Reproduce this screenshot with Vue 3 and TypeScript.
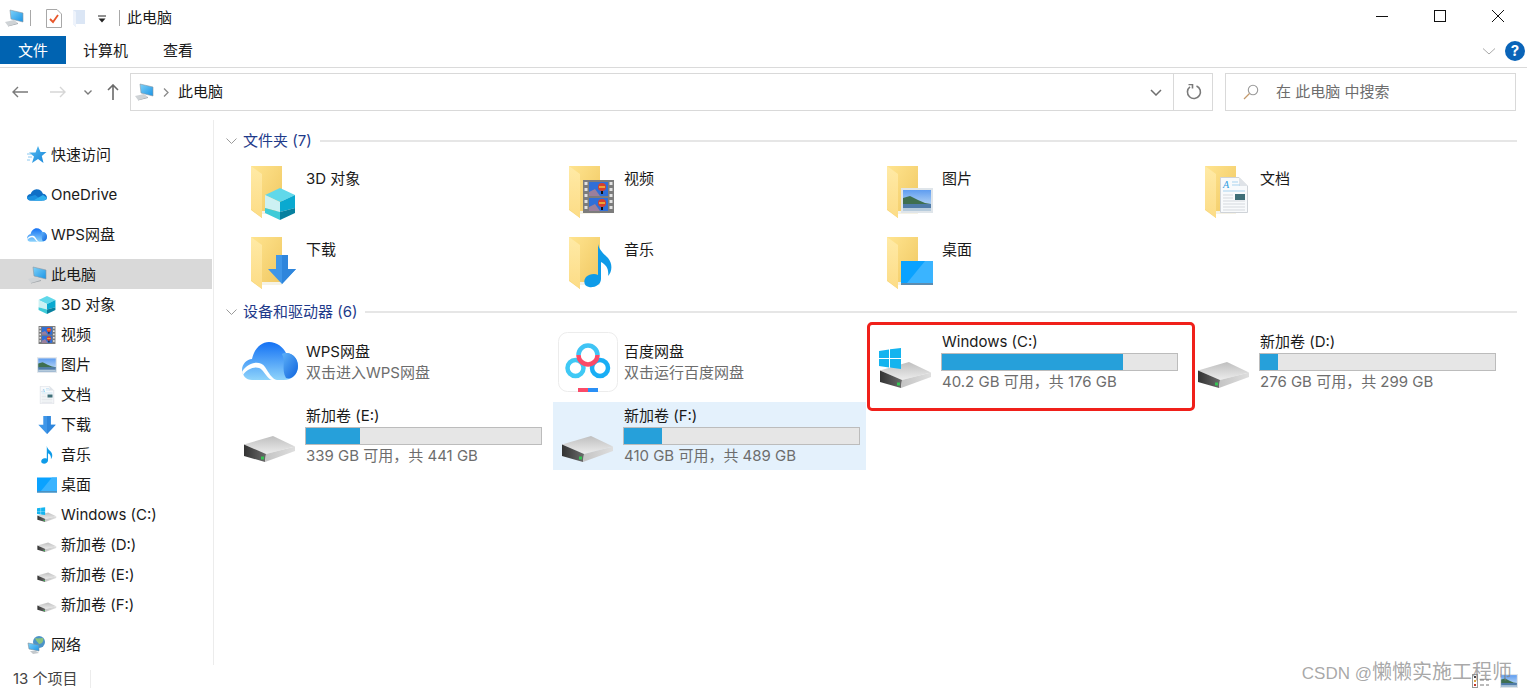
<script setup lang="ts">
interface NavItem { label: string; icon: string; child?: boolean; selected?: boolean; gap?: boolean }
const nav: NavItem[] = [
  { label: '快速访问', icon: 'star' },
  { label: 'OneDrive', icon: 'onedrive', gap: true },
  { label: 'WPS网盘', icon: 'wps', gap: true },
  { label: '此电脑', icon: 'pc', selected: true, gap: true },
  { label: '3D 对象', icon: 'cube', child: true },
  { label: '视频', icon: 'film', child: true },
  { label: '图片', icon: 'picture', child: true },
  { label: '文档', icon: 'doc', child: true },
  { label: '下载', icon: 'arrow', child: true },
  { label: '音乐', icon: 'music', child: true },
  { label: '桌面', icon: 'desktop', child: true },
  { label: 'Windows (C:)', icon: 'windrive', child: true },
  { label: '新加卷 (D:)', icon: 'drive', child: true },
  { label: '新加卷 (E:)', icon: 'drive', child: true },
  { label: '新加卷 (F:)', icon: 'drive', child: true },
  { label: '网络', icon: 'network', gap: true },
]
const folders = [
  { name: '3D 对象', icon: 'cube', x: 16, y: 24, w: 32, h: 32 },
  { name: '视频', icon: 'film', x: 17, y: 16, w: 31, h: 33 },
  { name: '图片', icon: 'picture', x: 17, y: 24, w: 32, h: 25 },
  { name: '文档', icon: 'doc', x: 18, y: 13, w: 28, h: 36 },
  { name: '下载', icon: 'arrow', x: 20, y: 20, w: 28, h: 29 },
  { name: '音乐', icon: 'music', x: 18, y: 9, w: 29, h: 44 },
  { name: '桌面', icon: 'desktop', x: 17, y: 26, w: 32, h: 24 },
]
const drives = [
  { name: 'Windows (C:)', free: 40.2, total: 176, icon: 'windrive', hi: false },
  { name: '新加卷 (D:)', free: 276, total: 299, icon: 'drive', hi: false },
  { name: '新加卷 (E:)', free: 339, total: 441, icon: 'drive', hi: false },
  { name: '新加卷 (F:)', free: 410, total: 489, icon: 'drive', hi: true },
]
const pct = (d: { free: number; total: number }) => ((d.total - d.free) / d.total) * 100 + '%'
</script>

<template>
  <div class="win">
    <svg class="defs" width="0" height="0" aria-hidden="true">
      <defs>
        <linearGradient id="gBack" x1="0" y1="0" x2="1" y2="1"><stop offset="0" stop-color="#ffe48f"/><stop offset="1" stop-color="#efc65f"/></linearGradient>
        <linearGradient id="gFront" x1="0" y1="0" x2="0" y2="1"><stop offset="0" stop-color="#ffeaa6"/><stop offset="1" stop-color="#fcdc86"/></linearGradient>
        <linearGradient id="gWps" x1="0" y1="0" x2="0" y2="1"><stop offset="0" stop-color="#1371f4"/><stop offset="1" stop-color="#8fd4fb"/></linearGradient>
        <linearGradient id="gWps2" x1="0" y1="0" x2="1" y2="1"><stop offset="0" stop-color="#5fb2f8"/><stop offset="1" stop-color="#0f63dd"/></linearGradient>
        <linearGradient id="gTop" x1="0" y1="0" x2="0" y2="1"><stop offset="0" stop-color="#bfbfbf"/><stop offset="1" stop-color="#ececec"/></linearGradient>
        <linearGradient id="gSide" x1="0" y1="0" x2="1" y2="0"><stop offset="0" stop-color="#c4c4c4"/><stop offset="1" stop-color="#dedede"/></linearGradient>
        <linearGradient id="gFace" x1="0" y1="0" x2="1" y2="0"><stop offset="0" stop-color="#333"/><stop offset="1" stop-color="#6a6a6a"/></linearGradient>
        <linearGradient id="gSky" x1="0" y1="0" x2="0" y2="1"><stop offset="0" stop-color="#5f9df0"/><stop offset="1" stop-color="#d4e8f7"/></linearGradient>
        <linearGradient id="gScreen" x1="0" y1="0" x2="1" y2="1"><stop offset="0" stop-color="#7fd2f8"/><stop offset="1" stop-color="#1b94e6"/></linearGradient>
        <linearGradient id="gStar" x1="0" y1="0" x2="1" y2="1"><stop offset="0" stop-color="#5cc0f2"/><stop offset="1" stop-color="#1483d8"/></linearGradient>

        <symbol id="folder" viewBox="0 0 50 56">
          <path d="M3 2H34V47H14V54L3 46Z" fill="url(#gBack)"/>
          <path d="M3 2L14 10V54L3 45Z" fill="url(#gFront)"/>
          <path d="M14 47H34V50H14Z" fill="#f5f2e6"/>
        </symbol>
        <symbol id="cube" viewBox="0 0 32 32">
          <path d="M16 0L31 7 16 14 1 7Z" fill="#60d8ea"/>
          <path d="M1 7L16 14V24L1 20Z" fill="#cdf1f3"/>
          <path d="M1 20L16 24V32L1 25Z" fill="#3ecbd8"/>
          <path d="M16 14L31 7V20L16 24Z" fill="#0aa9d0"/>
          <path d="M16 24L31 20V25L16 32Z" fill="#07809f"/>
        </symbol>
        <symbol id="film" viewBox="0 0 31 33">
          <rect width="31" height="33" fill="#7c7c7c"/>
          <g fill="#e2e2e2"><rect x="1.500" y="2" width="3" height="3"/><rect x="1.500" y="8" width="3" height="3"/><rect x="1.500" y="14" width="3" height="3"/><rect x="1.500" y="20" width="3" height="3"/><rect x="1.500" y="26" width="3" height="3"/><rect x="26.500" y="2" width="3" height="3"/><rect x="26.500" y="8" width="3" height="3"/><rect x="26.500" y="14" width="3" height="3"/><rect x="26.500" y="20" width="3" height="3"/><rect x="26.500" y="26" width="3" height="3"/></g>
          <rect x="6" y="2" width="19" height="14" fill="#2f6fd8"/>
          <rect x="6" y="18" width="19" height="13" fill="#2f6fd8"/>
          <path d="M6 12L12 9 17 16H6Z M6 27L12 24 17 31H6Z" fill="#9a7f9c"/>
          <circle cx="19" cy="7" r="4" fill="#d8402c"/><circle cx="19" cy="23" r="4" fill="#d8402c"/>
          <path d="M16 7h6M16 23h6" stroke="#f0c53a" stroke-width="1.500"/>
          <rect x="18" y="11" width="2" height="3" fill="#111"/><rect x="18" y="27" width="2" height="3" fill="#111"/>
        </symbol>
        <symbol id="picture" viewBox="0 0 32 25">
          <rect width="32" height="25" fill="#dfe5ea"/>
          <rect x="2" y="2" width="28" height="21" fill="url(#gSky)"/>
          <path d="M2 10L9 8 17 12 24 15 30 16V17H2Z" fill="#3f6f4f"/>
          <rect x="2" y="16" width="28" height="7" fill="#4f7ba8"/>
          <rect x="2" y="20" width="28" height="3" fill="#b6cbdc"/>
        </symbol>
        <symbol id="doc" viewBox="0 0 28 36">
          <path d="M.5.5H19L27.500 9V35.500H.5Z" fill="#f8fafc" stroke="#cfd3d8"/>
          <path d="M19 .5V9H27.500Z" fill="#dfe3e8"/>
          <text x="3" y="11" font-size="10" font-style="italic" font-family="Liberation Serif, serif" fill="#2f9ae0">A</text>
          <path d="M12 5H18M12 8H20M3 14H25" stroke="#a8d3ef"/>
          <path d="M3 18H13M3 21H13M3 24H25M3 27H25M3 30H25M3 33H25" stroke="#d5d9de"/>
          <rect x="15" y="17" width="10" height="6" fill="#3f6f78"/>
        </symbol>
        <symbol id="arrow" viewBox="0 0 28 29">
          <path d="M8 0H20V14H28L14 29 0 14H8Z" fill="#3f96e8"/>
          <path d="M14 0H20V14H28L14 29Z" fill="#2f86dc"/>
        </symbol>
        <symbol id="music" viewBox="0 0 29 44">
          <path d="M14 0C15 6 20 10 24 14 29 20 28 28 24 32 25 26 23 21 17 18V35C17 41 10 44 5 43 0 42-1 37 2 33 5 30 11 29 14 31Z" fill="#0f9be8"/>
        </symbol>
        <symbol id="desktop" viewBox="0 0 32 24">
          <rect width="32" height="24" fill="#0aa2ff"/>
          <path d="M6 22L24 0H32V22Z" fill="#3ab4ff"/>
          <rect y="22" width="32" height="2" fill="#5c8cb0"/>
        </symbol>
        <symbol id="drive" viewBox="0 0 54 42">
          <path d="M1 22.500L30 14 52 24.500 23 32Z" fill="url(#gTop)"/>
          <path d="M1 22.500L23 32 22 40 1 34Z" fill="url(#gFace)"/>
          <path d="M23 32L52 24.500V29L22 40Z" fill="url(#gSide)"/>
          <rect x="18" y="34.500" width="3" height="3" fill="#35c454"/>
        </symbol>
        <symbol id="windrive" viewBox="0 0 54 42">
          <use href="#drive" width="54" height="42"/>
          <path d="M0 3L10 1.500V10H0Z M11 1.300L22 0V10H11Z M0 11H10V19.500L0 18Z M11 11H22V21L11 19.600Z" fill="#14b4ef"/>
        </symbol>
        <symbol id="pc" viewBox="0 0 20 18">
          <path d="M6 1L19 4V13L7 10Z" fill="url(#gScreen)" stroke="#8a97a3" stroke-width=".6"/>
          <path d="M1 13L10 11 14 14 4 17Z" fill="#cfd3d6"/>
          <path d="M4 17L14 14V15L4 17.600Z" fill="#9fa5aa"/>
        </symbol>
        <symbol id="star" viewBox="0 0 20 18">
          <path d="M11 0L13.500 6H19.500L14.800 10 16.500 17 11 13 5 17 7 10.500 2 6.500H8.500Z" fill="url(#gStar)"/>
          <path d="M0 8H4M1 11H5M0 14H3" stroke="#8cc8f0"/>
        </symbol>
        <symbol id="onedrive" viewBox="0 0 22 14">
          <path d="M4 13C1 13 0 11 0 9.500 0 7.500 2 6 4 6 5 3 8 0 12 1 15 1 17 4 17.500 5.500 20 5.500 22 7.500 22 10 22 12 20 13 18 13Z" fill="#0f6fc6"/>
          <path d="M4 13C1.500 13 0 11.500 0 9.500L9 7 17 13Z" fill="#1b8fdf"/>
          <path d="M7 13L17.500 7 22 10C22 12 20 13 18 13Z" fill="#2fb0ee"/>
        </symbol>
        <symbol id="wps" viewBox="0 0 56 38">
          <path d="M10 38C4 38 0 33 0 28 0 22 5 17 10 17 12 7 19 0 27 0 35 0 41 5 44 11 51 11 56 17 56 24 56 32 50 38 42 38Z" fill="url(#gWps)"/>
          <path d="M40 12C44 9 56 12 56 24 56 32 50 38 44 36 39 27 44 20 40 12Z" fill="url(#gWps2)"/>
          <path d="M0 30C6 20 18 18 23 25 27 31 30 37 35 38H30C26 37 23 31 20 28 15 23 6 26 1 33Z" fill="#fff"/>
        </symbol>
        <symbol id="baidu" viewBox="0 0 60 60">
          <rect x=".5" y=".5" width="59" height="59" rx="9" fill="#fff" stroke="#ececec"/>
          <g fill="none" stroke-width="4.500">
            <circle cx="17.500" cy="36" r="8" stroke="#3fc9f5"/>
            <circle cx="42" cy="36" r="8" stroke="#18aef5"/>
            <path d="M20.500 23A9.500 9.500 0 0 1 39.500 23" stroke="#3fc4f5"/>
            <path d="M20.500 23A9.500 9.500 0 0 0 39.500 23" stroke="#fa4a68"/>
          </g>
          <rect x="20" y="56" width="10" height="4" fill="#fa4a68"/>
          <rect x="30" y="56" width="10" height="4" fill="#2a8ff5"/>
        </symbol>
        <symbol id="network" viewBox="0 0 20 18">
          <circle cx="12" cy="6" r="6" fill="#4b93c8"/>
          <path d="M8 2C11 3 14 2 16 2 17 5 15 8 12 8 11 6 9 5 8 2Z" fill="#8bc47f"/>
          <path d="M1 7L12 9V15L2 13Z" fill="url(#gScreen)" stroke="#7f8e99" stroke-width=".6"/>
          <path d="M3 15L9 15 12 17 6 18Z" fill="#c3c8cc"/>
        </symbol>
      </defs>
    </svg>

    <header class="titlebar">
      <div class="quick">
        <svg class="q-pc" width="20" height="18"><use href="#pc" width="20" height="18"/></svg>
        <i class="vsep v1"></i>
        <svg class="q-check" width="16" height="19" viewBox="0 0 16 19">
          <path d="M.5.5H11L15.500 5V18.500H.5Z" fill="#fff" stroke="#a8a8a8"/>
          <path d="M4 10L7 13 12 6" fill="none" stroke="#e8562a" stroke-width="1.800"/>
        </svg>
        <svg class="q-folder" width="13" height="17" viewBox="0 0 13 17">
          <path d="M0 0H12V14H3V17L0 14Z" fill="#dbe6f5"/><path d="M0 0L3 2V17L0 14Z" fill="#eef3fb"/>
        </svg>
        <svg class="q-drop" width="8" height="8" viewBox="0 0 8 8">
          <path d="M0 1H8" stroke="#222"/><path d="M.5 3.500H7.500L4 7.500Z" fill="#222"/>
        </svg>
        <i class="vsep v2"></i>
        <span class="title">此电脑</span>
      </div>
      <div class="winbtns">
        <svg width="12" height="12" viewBox="0 0 12 12"><path d="M0 6.500H12" stroke="#111"/></svg>
        <svg width="12" height="12" viewBox="0 0 12 12"><rect x=".5" y=".5" width="11" height="11" fill="none" stroke="#111"/></svg>
        <svg width="12" height="12" viewBox="0 0 12 12"><path d="M0 0L12 12M12 0L0 12" stroke="#111"/></svg>
      </div>
    </header>

    <div class="tabs">
      <div class="tab active">文件</div>
      <div class="tab t2">计算机</div>
      <div class="tab t3">查看</div>
      <div class="ribbon-right">
        <svg width="12" height="7" viewBox="0 0 12 7"><path d="M0 .5L6 6 12 .5" fill="none" stroke="#a9a9a9"/></svg>
        <div class="help">?</div>
      </div>
    </div>

    <div class="navbar">
      <div class="navbtns">
        <svg class="b-back" width="16" height="12" viewBox="0 0 16 12"><path d="M6 1L1 6 6 11M1 6H16" fill="none" stroke="#7a7a7a" stroke-width="1.400"/></svg>
        <svg class="b-fwd" width="16" height="12" viewBox="0 0 16 12"><path d="M10 1L15 6 10 11M15 6H0" fill="none" stroke="#d6d6d6" stroke-width="1.400"/></svg>
        <svg class="b-down" width="8" height="5" viewBox="0 0 8 5"><path d="M.5.5L4 4 7.500.5" fill="none" stroke="#7a7a7a" stroke-width="1.400"/></svg>
        <svg class="b-up" width="12" height="16" viewBox="0 0 12 16"><path d="M1 6L6 1 11 6M6 1V16" fill="none" stroke="#6a6a6a" stroke-width="1.600"/></svg>
      </div>
      <div class="address">
        <svg class="a-pc" width="20" height="18"><use href="#pc" width="20" height="18"/></svg>
        <svg class="a-chev" width="6" height="9" viewBox="0 0 6 9"><path d="M1 .5L5 4.500 1 8.500" fill="none" stroke="#8a8a8a" stroke-width="1.300"/></svg>
        <span class="a-text">此电脑</span>
        <svg class="a-drop" width="12" height="7" viewBox="0 0 12 7"><path d="M1 1L6 6 11 1" fill="none" stroke="#6f6f6f" stroke-width="1.500"/></svg>
        <div class="a-refresh">
          <svg width="16" height="16" viewBox="0 0 16 16"><path d="M4 2.800A6.500 6.500 0 1 0 10.500 2" fill="none" stroke="#7a7a7a" stroke-width="1.600"/><path d="M2.500 .5H6.500V4.500" fill="none" stroke="#7a7a7a" stroke-width="1.600"/></svg>
        </div>
      </div>
      <div class="search">
        <svg width="16" height="16" viewBox="0 0 16 16"><circle cx="10" cy="6" r="4.700" fill="none" stroke="#9a9a9a" stroke-width="1.100"/><path d="M6.500 9.500L1 15" stroke="#c49a6c" stroke-width="1.300"/></svg>
        <span>在 此电脑 中搜索</span>
      </div>
    </div>

    <div class="body">
      <aside class="side">
        <div v-for="n in nav" :key="n.label" class="nav-item" :class="{ child: n.child, sel: n.selected, gap: n.gap }">
          <svg class="nav-icon" width="20" height="18"><use :href="'#' + n.icon" width="20" height="18"/></svg>
          <span>{{ n.label }}</span>
        </div>
      </aside>
      <main class="content">
        <div class="sec-head">
          <svg width="11" height="6" viewBox="0 0 11 6"><path d="M.5.5L5.500 5.500 10.500.5" fill="none" stroke="#9a9a9a"/></svg>
          <span>文件夹 (7)</span><i></i>
        </div>
        <div class="grid folders">
          <div v-for="f in folders" :key="f.name" class="tile">
            <svg width="50" height="56">
              <use href="#folder" width="50" height="56"/>
              <use :href="'#' + f.icon" :x="f.x" :y="f.y" :width="f.w" :height="f.h"/>
            </svg>
            <span class="f-name">{{ f.name }}</span>
          </div>
        </div>
        <div class="sec-head second">
          <svg width="11" height="6" viewBox="0 0 11 6"><path d="M.5.5L5.500 5.500 10.500.5" fill="none" stroke="#9a9a9a"/></svg>
          <span>设备和驱动器 (6)</span><i></i>
        </div>
        <div class="grid drives">
          <div class="app-tile">
            <svg class="wps-ic" width="56" height="38"><use href="#wps" width="56" height="38"/></svg>
            <div class="app-text"><div>WPS网盘</div><div class="muted">双击进入WPS网盘</div></div>
          </div>
          <div class="app-tile">
            <svg class="bd-ic" width="60" height="60"><use href="#baidu" width="60" height="60"/></svg>
            <div class="app-text bd"><div>百度网盘</div><div class="muted">双击运行百度网盘</div></div>
          </div>
          <div v-for="d in drives" :key="d.name" class="drive-tile" :class="{ hi: d.hi }">
            <svg class="dr-ic" width="54" height="42"><use :href="'#' + d.icon" width="54" height="42"/></svg>
            <div class="dr-info">
              <div class="dr-name">{{ d.name }}</div>
              <div class="bar"><div class="fill" :style="{ width: pct(d) }"></div></div>
              <div class="muted">{{ d.free }} GB 可用，共 {{ d.total }} GB</div>
            </div>
          </div>
        </div>
      </main>
    </div>

    <footer class="status">
      <span>13 个项目</span><i></i>
      <div class="views">
        <svg width="17" height="14" viewBox="0 0 17 14"><rect x=".5" y=".5" width="5" height="13" fill="#fff" stroke="#999"/><rect x="2" y="2" width="2" height="2" fill="#444"/><rect x="2" y="6" width="2" height="2" fill="#d9a441"/><rect x="2" y="10" width="2" height="2" fill="#c0392b"/><path d="M8 6H12M14 6H17M8 11H12M14 11H17" stroke="#777"/></svg>
        <svg width="18" height="14"><use href="#picture" width="18" height="14"/></svg>
      </div>
    </footer>

    <div class="redbox"></div>
    <div class="watermark"><span class="wm-latin">CSDN @</span>懒懒实施工程师</div>
  </div>
</template>

<style scoped>
.win {
  position: relative;
  width: 1527px;
  height: 690px;
  overflow: hidden;
  background: #fff;
  color: #1a1a1a;
  font-family: Inter, "Noto Sans CJK SC", sans-serif;
  font-size: 15px;
  line-height: 20px;
  display: flex;
  flex-direction: column;
}
.defs { position: absolute; }
.titlebar { height: 36px; display: flex; align-items: center; justify-content: space-between; flex: none; }
.quick { display: flex; align-items: center; }
.q-pc { margin: 0 0 0 4px; }
.vsep { width: 1px; height: 16px; background: #a8a8a8; display: block; }
.v1 { margin-left: 6px; }
.q-check { margin-left: 15px; }
.q-folder { margin-left: 11px; }
.q-drop { margin-left: 12px; margin-top: 2px; }
.v2 { margin-left: 13px; }
.title { margin-left: 7px; }
.winbtns { display: flex; gap: 46px; padding-right: 23px; margin-top: -4px; }
.tabs { height: 32px; box-sizing: border-box; display: flex; flex: none; align-items: flex-start; border-bottom: 1px solid #dadada; }
.tab { height: 28px; line-height: 30px; }
.tab.active { width: 66px; text-align: center; background: #0063b1; color: #fff; }
.t2 { margin-left: 17px; }
.t3 { margin-left: 35px; }
.ribbon-right { margin-left: auto; display: flex; align-items: center; gap: 10px; padding: 5px 2px 0 0; }
.help { width: 20px; height: 20px; border-radius: 50%; background: #0a64b8; color: #fff; font-weight: 700; font-size: 15px; line-height: 20px; text-align: center; }
.navbar { height: 52px; box-sizing: border-box; flex: none; display: flex; align-items: flex-start; padding-top: 5px; }
.navbtns { width: 130px; height: 38px; display: flex; align-items: center; flex: none; }
.b-back { margin-left: 12px; }
.b-fwd { margin-left: 22px; }
.b-down { margin-left: 18px; }
.b-up { margin-left: 15px; }
.address { width: 1083px; height: 38px; box-sizing: border-box; border: 1px solid #d9d9d9; display: flex; align-items: center; flex: none; }
.a-pc { margin-left: 3px; }
.a-chev { margin-left: 9px; }
.a-text { margin-left: 9px; }
.a-drop { margin-left: auto; margin-right: 11px; }
.a-refresh { width: 39px; height: 36px; box-sizing: content-box; border-left: 1px solid #d9d9d9; display: flex; align-items: center; justify-content: center; padding-left: 1px; box-sizing: border-box; }
.search { margin-left: 12px; width: 291px; height: 38px; box-sizing: border-box; border: 1px solid #d9d9d9; display: flex; align-items: center; padding-left: 17px; gap: 17px; color: #6d6d6d; flex: none; }
.body { height: 545px; flex: none; display: flex; }
.side { width: 214px; height: 545px; box-sizing: border-box; border-right: 1px solid #ececec; padding-top: 20px; flex: none; }
.nav-item { height: 30px; box-sizing: border-box; display: flex; align-items: center; padding-left: 27px; }
.nav-item.gap { margin-top: 10px; }
.nav-item.sel { margin-top: 9px; margin-right: 1px; background: #d9d9d9; padding-top: 2px; }
.nav-item.child { padding-left: 37px; padding-top: 2px; }
.nav-item:last-child { padding-top: 2px; }
.nav-icon { margin-right: 4px; flex: none; }
.content { flex: 1; padding-top: 11px; padding-left: 12px; }
.sec-head { height: 20px; display: flex; align-items: center; padding-right: 10px; color: #1e3a8a; }
.sec-head span { margin-left: 6px; }
.sec-head i { flex: 1; height: 2px; background: #e6e6e6; margin-left: 8px; }
.second { margin-top: 8px; }
.grid { display: grid; grid-template-columns: repeat(4, 313px); column-gap: 5px; margin-left: 9px; row-gap: 6px; }
.folders { margin-top: 7px; grid-auto-rows: 65px; }
.drives { margin-top: 6px; grid-auto-rows: 68px; }
.tile { display: flex; padding-left: 13px; padding-top: 6px; box-sizing: border-box; gap: 8px; }
.f-name { margin-top: 5px; }
.app-tile { display: flex; }
.wps-ic { margin: 14px 0 0 7px; flex: none; }
.bd-ic { margin: 4px 0 0 5px; flex: none; }
.app-text { margin: 13px 0 0 8px; line-height: 21px; }
.app-text.bd { margin-left: 6px; }
.muted { color: #6d6d6d; }
.drive-tile { display: flex; }
.drive-tile.hi { background: #e4f1fc; }
.dr-ic { margin: 20px 0 0 8px; flex: none; }
.dr-info { margin-left: 8px; width: 237px; padding-top: 4px; }
.dr-name { margin-left: 1px; }
.dr-info .muted { margin: 1px 0 0 1px; }
.bar { height: 18px; box-sizing: border-box; border: 1px solid #bcbcbc; background: #e6e6e6; margin-top: 1px; }
.fill { height: 100%; background: #26a0da; }
.status { height: 25px; flex: none; display: flex; align-items: center; padding-left: 13px; padding-top: 2px; box-sizing: border-box; color: #444; }
.status i { width: 1px; height: 18px; background: #ececec; margin-left: 12px; }
.views { margin-left: auto; display: flex; gap: 11px; padding-right: 9px; margin-top: 4px; }
.redbox { position: absolute; left: 867px; top: 322px; width: 328px; height: 89px; box-sizing: border-box; border: 3px solid #f0201a; border-radius: 5px; }
.watermark { position: absolute; right: 15px; top: 659px; font-family: "Liberation Sans", "Noto Sans CJK SC", sans-serif; font-size: 20px; line-height: 26px; color: rgba(130, 130, 130, 0.7); white-space: nowrap; }
.wm-latin { font-size: 17px; }
</style>
